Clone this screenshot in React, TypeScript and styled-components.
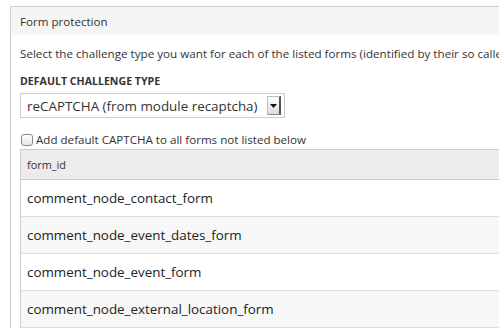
import React from "react";
import styled, { createGlobalStyle } from "styled-components";

const Global = createGlobalStyle`
  html, body { margin: 0; padding: 0; background: #fff; overflow: hidden; }
  body { font-family: "Open Sans", "DejaVu Sans", sans-serif; color: #333; }
`;

const Page = styled.div`
  padding: 6px 0 0 10px;
  width: 760px;
`;

const Fieldset = styled.section`
  border: 1px solid #ccc;
  border-right: none;
  border-bottom: none;
  background: #fff;
`;

const Legend = styled.div`
  height: 28px;
  background: #f5f5f5;
  display: flex;
  align-items: center;
  padding-left: 9px;
  font-size: 11.6px;
  color: #333;
`;

const Body = styled.div`
  padding: 10px 0 0 9px;
  display: flex;
  flex-direction: column;
`;

const Description = styled.p`
  margin: 0;
  font-size: 11.65px;
  line-height: 18px;
  color: #333;
  white-space: nowrap;
`;

const Label = styled.div`
  margin-top: 11px;
  font-size: 10.6px;
  font-weight: 700;
  text-transform: uppercase;
  color: #333;
  line-height: 14px;
`;

const Select = styled.div`
  margin-top: 5px;
  width: 254px;
  height: 23px;
  border: 1px solid #ccc;
  display: flex;
  align-items: center;
  justify-content: space-between;
  padding: 0 3px 0 6px;
  font-size: 13.4px;
  color: #333;
  box-sizing: content-box;
`;

const Arrow = styled.div`
  width: 11px;
  height: 17px;
  border: 1px solid #bbb;
  border-right: 2px solid #555;
  border-bottom: 1px solid #888;
  background: linear-gradient(#fff, #ddd);
  display: flex;
  align-items: center;
  justify-content: center;
`;

const CheckRow = styled.label`
  margin-top: 15px;
  display: flex;
  align-items: center;
  gap: 3px;
  font-size: 11.6px;
  color: #333;
  line-height: 14px;
`;

const Box = styled.span`
  width: 10px;
  height: 10px;
  border: 1px solid #888;
  border-radius: 3px;
  background: linear-gradient(#fff, #e8e8e8);
  margin-left: 1px;
`;

const Table = styled.div`
  margin-top: 2px;
  border-left: 1px solid #ccc;
  display: flex;
  flex-direction: column;
`;

const HeaderRow = styled.div`
  height: 29px;
  border-top: 1px solid #ccc;
  border-bottom: 1px solid #ccc;
  background: #ececec;
  display: flex;
  align-items: center;
  padding-left: 6px;
  font-size: 10.9px;
  color: #333;
`;

const Row = styled.div<{ $odd: boolean }>`
  height: 36px;
  border-bottom: 1px solid #ddd;
  background: ${(p) => (p.$odd ? "#f7f7f7" : "#fff")};
  display: flex;
  align-items: center;
  padding-left: 6px;
  font-size: 13.4px;
  color: #222;
`;

const rows = [
  "comment_node_contact_form",
  "comment_node_event_dates_form",
  "comment_node_event_form",
  "comment_node_external_location_form",
];

export default function App() {
  return (
    <>
      <Global />
      <Page>
        <Fieldset>
          <Legend>Form protection</Legend>
          <Body>
            <Description>
              Select the challenge type you want for each of the listed forms (identified by their so called form_id's).
            </Description>
            <Label>Default challenge type</Label>
            <Select>
              <span>reCAPTCHA (from module recaptcha)</span>
              <Arrow>
                <svg width="7" height="4" viewBox="0 0 7 4">
                  <path d="M0 0h7L3.5 4z" fill="#111" />
                </svg>
              </Arrow>
            </Select>
            <CheckRow>
              <Box />
              Add default CAPTCHA to all forms not listed below
            </CheckRow>
            <Table>
              <HeaderRow>form_id</HeaderRow>
              {rows.map((r, i) => (
                <Row key={r} $odd={i % 2 === 1}>
                  {r}
                </Row>
              ))}
            </Table>
          </Body>
        </Fieldset>
      </Page>
    </>
  );
}
